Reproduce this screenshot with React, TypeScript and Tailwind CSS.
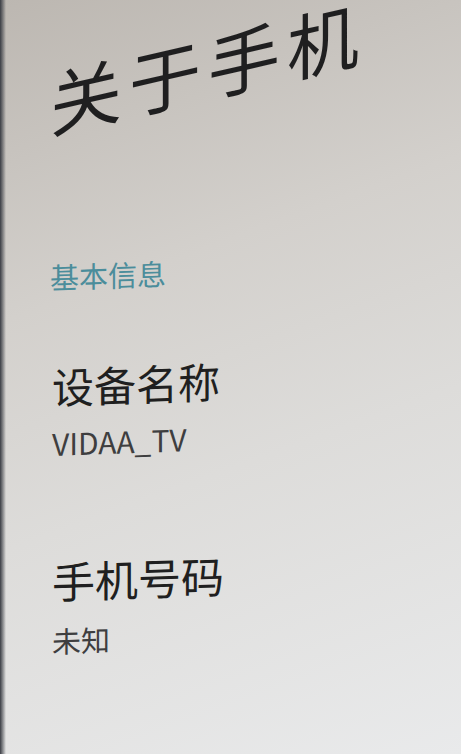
const cjk = { fontFamily: '"Noto Sans CJK SC", "Noto Sans", sans-serif' }

export default function App() {
  return (
    <div
      className="relative h-[754px] w-[461px] overflow-hidden bg-[linear-gradient(160deg,#bcb7b1_0%,#d3d0cc_35%,#dddcda_60%,#e9eaeb_100%)]"
      style={cjk}
    >
      {/* screen bezel edge */}
      <div className="absolute inset-y-0 left-0 w-[6px] bg-gradient-to-r from-[#3a3d44] to-transparent" />

      <div className="flex flex-col pl-[50px]">
        {/* photo perspective: title leans up to the right */}
        <h1 className="mt-[66px] origin-left -skew-y-[13deg] text-[72px] font-normal leading-none tracking-[7px] text-[#1f1f20]">
          关于手机
        </h1>

        <div className="origin-left -skew-y-[2deg]">
          <div className="mt-[124px] text-[29px] leading-none text-[#4b8d9b]">基本信息</div>

          <div className="mt-[74px] pl-[2px] text-[42px] leading-none text-[#1f1f20]">设备名称</div>
          <div className="mt-[21px] pl-[2px] text-[30px] leading-none text-[#3e3e3f]">VIDAA_TV</div>

          <div className="mt-[101px] pl-[2px] text-[43px] leading-none text-[#1f1f20]">手机号码</div>
          <div className="mt-[24px] pl-[2px] text-[29px] leading-none text-[#3e3e3f]">未知</div>
        </div>
      </div>
    </div>
  )
}
